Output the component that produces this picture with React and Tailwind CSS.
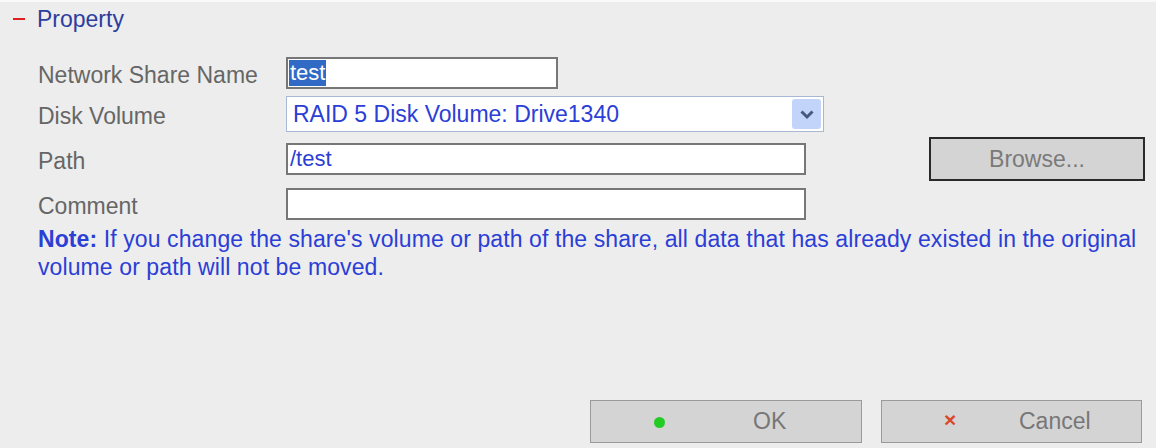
export default function App() {
  const font = { fontFamily: '"Liberation Sans", Arial, sans-serif' }

  return (
    <div
      className="w-[1156px] h-[448px] bg-[#ededed] border-t-2 border-[#f9f9f9] flex flex-col overflow-hidden text-[23px]"
      style={font}
    >
      {/* Header */}
      <div className="flex items-center h-[34px] pl-[13px]">
        <span className="block w-[12px] h-[2px] bg-[#e02020]" />
        <span className="ml-[12px] text-[#2d3e9e] leading-none">Property</span>
      </div>

      {/* Form */}
      <div className="pl-[38px] mt-[21px] flex flex-col">
        <div className="flex items-center h-8">
          <div className="w-[248px] pt-[5px] text-[#666] leading-none">Network Share Name</div>
          <div className="w-[272px] h-8 bg-white border-2 border-[#777] flex items-center pl-[1px]">
            <span className="bg-[#316ac5] text-white text-[22px] leading-[26px] px-[1px]">test</span>
          </div>
        </div>

        <div className="flex items-center h-9 mt-[7px]">
          <div className="w-[248px] pt-[5px] text-[#666] leading-none">Disk Volume</div>
          <div className="w-[538px] h-9 bg-white border border-[#a8b8d4] flex items-center pl-[6px] pr-[2px]">
            <span className="flex-1 text-[#2b3ed6] leading-none">RAID 5 Disk Volume: Drive1340</span>
            <span className="w-[29px] h-[30px] rounded-[3px] bg-[#c3d4fa] flex items-center justify-center">
              <svg width="16" height="11" viewBox="0 0 16 11">
                <path d="M2.5 2.5 L8 8 L13.5 2.5" fill="none" stroke="#46587e" strokeWidth="3" />
              </svg>
            </span>
          </div>
        </div>

        <div className="flex items-center h-[44px] mt-[5px]">
          <div className="w-[248px] pt-[5px] text-[#666] leading-none">Path</div>
          <div className="w-[520px] h-8 bg-white border-2 border-[#777] flex items-center pl-[2px]">
            <span className="text-[#2b3ed6] text-[22px] leading-none">/test</span>
          </div>
          <button className="ml-[123px] w-[216px] h-[44px] bg-[#d4d4d4] border-2 border-[#2a2a2a] text-[#7a7a7a] text-[23px]">
            Browse...
          </button>
        </div>

        <div className="flex items-center h-8 mt-[7px]">
          <div className="w-[248px] pt-[5px] text-[#666] leading-none">Comment</div>
          <div className="w-[520px] h-8 bg-white border-2 border-[#777]" />
        </div>

        <p className="mt-[5px] whitespace-nowrap text-[#2b3ed6] leading-[28px] tracking-[0.1px]">
          <span className="font-bold">Note:</span> If you change the share's volume or path of the share, all data that has already existed in the original
          <br />
          volume or path will not be moved.
        </p>
      </div>

      {/* Actions */}
      <div className="mt-auto mb-[5px] pr-[14px] flex justify-end gap-[19px]">
        <button className="relative w-[272px] h-[43px] bg-[#d4d4d4] border border-[#9a9a9a] text-[#777] text-[23px]">
          <span className="absolute left-[63px] top-[16px] w-[11px] h-[11px] rounded-full bg-[#22cc22]" />
          <span className="absolute left-[162px] top-[9px] leading-none">OK</span>
        </button>
        <button className="relative w-[261px] h-[43px] bg-[#d4d4d4] border border-[#9a9a9a] text-[#777] text-[23px]">
          <span className="absolute left-[62px] top-[8px] text-[#d9482a] font-bold text-[21px] leading-none">×</span>
          <span className="absolute left-[137px] top-[9px] leading-none">Cancel</span>
        </button>
      </div>
    </div>
  )
}
